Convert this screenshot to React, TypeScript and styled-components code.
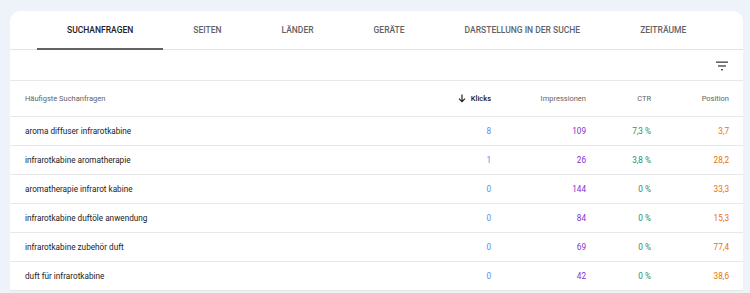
import styled, { createGlobalStyle } from "styled-components";

const GlobalStyle = createGlobalStyle`
  html, body {
    margin: 0;
    padding: 0;
    background: #eef3fa;
    font-family: Roboto, "Liberation Sans", Arial, sans-serif;
  }
`;

const tabs = [
  "Suchanfragen",
  "Seiten",
  "Länder",
  "Geräte",
  "Darstellung in der Suche",
  "Zeiträume",
];

const rows = [
  { query: "aroma diffuser infrarotkabine", clicks: "8", impressions: "109", ctr: "7,3 %", position: "3,7" },
  { query: "infrarotkabine aromatherapie", clicks: "1", impressions: "26", ctr: "3,8 %", position: "28,2" },
  { query: "aromatherapie infrarot kabine", clicks: "0", impressions: "144", ctr: "0 %", position: "33,3" },
  { query: "infrarotkabine duftöle anwendung", clicks: "0", impressions: "84", ctr: "0 %", position: "15,3" },
  { query: "infrarotkabine zubehör duft", clicks: "0", impressions: "69", ctr: "0 %", position: "77,4" },
  { query: "duft für infrarotkabine", clicks: "0", impressions: "42", ctr: "0 %", position: "38,6" },
];

const colors = {
  clicks: "#4e8ff0",
  impressions: "#8430ce",
  ctr: "#1e8e6e",
  position: "#e8710a",
};

export default function App() {
  return (
    <>
      <GlobalStyle />
      <Card>
        <TabBar>
          {tabs.map((t, i) => (
            <Tab key={t} $active={i === 0}>
              {t}
            </Tab>
          ))}
        </TabBar>
        <FilterRow>
          <FilterButton aria-label="Filter">
            <svg width="14" height="10" viewBox="0 0 14 10">
              <rect x="1" y="0.5" width="12" height="1.3" fill="#3c4043" />
              <rect x="3" y="4.3" width="8" height="1.3" fill="#3c4043" />
              <rect x="6" y="8.1" width="2" height="1.3" fill="#3c4043" />
            </svg>
          </FilterButton>
        </FilterRow>
        <Table>
          <HeaderRow>
            <HeadCell>Häufigste Suchanfragen</HeadCell>
            <HeadCell $right $sorted>
              <svg width="8" height="9" viewBox="0 0 8 9">
                <path d="M4 0.5 V7.5 M1 4.6 L4 7.6 L7 4.6" stroke="#202124" strokeWidth="1.2" fill="none" />
              </svg>
              Klicks
            </HeadCell>
            <HeadCell $right>Impressionen</HeadCell>
            <HeadCell $right>CTR</HeadCell>
            <HeadCell $right>Position</HeadCell>
          </HeaderRow>
          {rows.map((r) => (
            <Row key={r.query}>
              <QueryCell>{r.query}</QueryCell>
              <NumCell $color={colors.clicks}>{r.clicks}</NumCell>
              <NumCell $color={colors.impressions}>{r.impressions}</NumCell>
              <NumCell $color={colors.ctr}>{r.ctr}</NumCell>
              <NumCell $color={colors.position}>{r.position}</NumCell>
            </Row>
          ))}
        </Table>
      </Card>
    </>
  );
}

const Card = styled.div`
  margin: 11px 7px 0 10px;
  background: #fff;
  border-radius: 10px 10px 0 0;
  overflow: hidden;
`;

const TabBar = styled.div`
  display: flex;
  padding-left: 27px;
  height: 38px;
  border-bottom: 1px solid #e3e3e3;
`;

const Tab = styled.div<{ $active?: boolean }>`
  display: flex;
  flex-shrink: 0;
  align-items: center;
  white-space: nowrap;
  padding: 1px 30px 0;
  font-size: 8.5px;
  font-weight: 500;
  text-transform: uppercase;
  color: ${(p) => (p.$active ? "#202124" : "#5f6368")};
  border-bottom: 2px solid ${(p) => (p.$active ? "#5f6368" : "transparent")};
  box-sizing: border-box;
  height: 39px;
  margin-bottom: -1px;
`;

const FilterRow = styled.div`
  display: flex;
  justify-content: flex-end;
  align-items: center;
  height: 30px;
  padding-right: 14px;
  border-bottom: 1px solid #e8e8e8;
`;

const FilterButton = styled.div`
  display: flex;
  width: 14px;
  height: 10px;
  margin-top: 2px;
`;

const Table = styled.div`
  display: flex;
  flex-direction: column;
`;

const gridCols = `
  display: grid;
  grid-template-columns: 1fr 100px 95px 65px 78px;
  padding: 0 14px 0 15px;
  align-items: center;
  border-bottom: 1px solid #e8e8e8;
`;

const HeaderRow = styled.div`
  ${gridCols}
  height: 35px;
`;

const Row = styled.div`
  ${gridCols}
  height: 28px;
`;

const HeadCell = styled.div<{ $right?: boolean; $sorted?: boolean }>`
  display: flex;
  align-items: center;
  justify-content: ${(p) => (p.$right ? "flex-end" : "flex-start")};
  gap: 5px;
  font-size: 7.5px;
  color: ${(p) => (p.$sorted ? "#202124" : "#5f6368")};
  font-weight: ${(p) => (p.$sorted ? 500 : 400)};
`;

const QueryCell = styled.div`
  font-size: 8.2px;
  color: #202124;
`;

const NumCell = styled.div<{ $color: string }>`
  text-align: right;
  font-size: 8.2px;
  color: ${(p) => p.$color};
`;
